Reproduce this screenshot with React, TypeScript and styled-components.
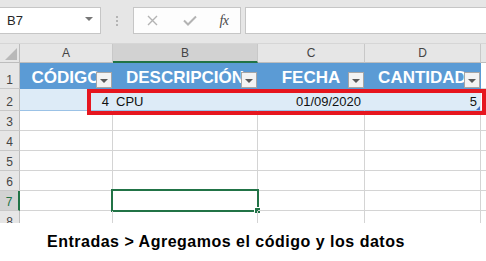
import React from 'react';
import styled, { createGlobalStyle, css } from 'styled-components';

const GlobalStyle = createGlobalStyle`
  html, body { margin: 0; padding: 0; background: #ffffff; }
  body {
    font-family: "Liberation Sans", Arial, sans-serif;
    width: 486px;
    height: 261px;
    overflow: hidden;
  }
  #root { width: 486px; height: 261px; }
`;

const Page = styled.div`
  position: relative;
  width: 486px;
  height: 261px;
  overflow: hidden;
  background: #ffffff;
`;

/* ---------- Formula toolbar ---------- */

const Toolbar = styled.div`
  height: 44px;
  box-sizing: border-box;
  background: #e6e6e6;
  display: flex;
  align-items: flex-start;
  padding-top: 7px;
  border-bottom: 1px solid #d6d6d6;
`;

const NameBox = styled.div`
  width: 101px;
  height: 27px;
  box-sizing: border-box;
  background: #ffffff;
  border: 1px solid #c6c6c6;
  border-left: none;
  display: flex;
  align-items: center;
  justify-content: space-between;
  padding: 0 7px 0 7px;
  font-size: 13px;
  color: #262626;
`;

const Caret = styled.span`
  width: 0;
  height: 0;
  border-left: 4px solid transparent;
  border-right: 4px solid transparent;
  border-top: 4px solid #777777;
  margin-top: -3px;
`;

const Grip = styled.div`
  width: 32px;
  height: 27px;
  display: flex;
  flex-direction: column;
  align-items: center;
  justify-content: center;
  gap: 2px;
`;

const GripDot = styled.span`
  width: 2px;
  height: 2px;
  background: #b4b4b4;
`;

const FormulaButtons = styled.div`
  width: 108px;
  height: 27px;
  box-sizing: border-box;
  background: #fdfdfd;
  border: 1px solid #c6c6c6;
  display: flex;
  align-items: center;
  padding-left: 12px;
`;

const ToolIcon = styled.span<{ $w: number }>`
  width: ${(p) => p.$w}px;
  display: flex;
  align-items: center;
  justify-content: center;
`;

const FxLabel = styled.span`
  font-family: "Liberation Serif", "Times New Roman", serif;
  font-style: italic;
  font-size: 14px;
  color: #4a4a4a;
  letter-spacing: -0.5px;
`;

const FormulaInput = styled.div`
  flex: 1;
  height: 27px;
  box-sizing: border-box;
  margin-left: 4px;
  margin-right: -4px;
  background: #ffffff;
  border: 1px solid #c6c6c6;
`;

/* ---------- Sheet ---------- */

const SheetWrap = styled.div`
  height: 179px;
  overflow: hidden;
`;

const Sheet = styled.div`
  display: grid;
  grid-template-columns: 20px 93px 145px 107px 116px 1fr;
  grid-template-rows: 19px 26px 22px repeat(6, 20px);
`;

type CellKind = 'head' | 'band' | 'plain';

const Corner = styled.div`
  position: relative;
  background: #e6e6e6;
  border-right: 1px solid #bdbdbd;
  border-bottom: 1px solid #bdbdbd;
  box-sizing: border-box;
`;

const CornerTriangle = styled.span`
  position: absolute;
  right: 2px;
  bottom: 2px;
  width: 0;
  height: 0;
  border-left: 12px solid transparent;
  border-bottom: 12px solid #b9b9b9;
`;

const ColHead = styled.div<{ $selected?: boolean }>`
  box-sizing: border-box;
  display: flex;
  align-items: center;
  justify-content: center;
  font-size: 12px;
  color: #444444;
  background: ${(p) => (p.$selected ? '#d2d2d2' : '#e6e6e6')};
  border-right: 1px solid #c8c8c8;
  border-bottom: ${(p) => (p.$selected ? '2px solid #217346' : '1px solid #bdbdbd')};
`;

const RowHead = styled.div<{ $selected?: boolean }>`
  box-sizing: border-box;
  display: flex;
  align-items: flex-end;
  justify-content: center;
  font-size: 12px;
  padding-bottom: 1px;
  color: ${(p) => (p.$selected ? '#217346' : '#444444')};
  background: ${(p) => (p.$selected ? '#d2d2d2' : '#e6e6e6')};
  border-right: ${(p) => (p.$selected ? '2px solid #217346' : '1px solid #bdbdbd')};
  border-bottom: 1px solid #c8c8c8;
`;

const Cell = styled.div<{ $kind: CellKind; $align?: 'left' | 'right' | 'center' }>`
  position: relative;
  box-sizing: border-box;
  display: flex;
  align-items: flex-end;
  white-space: nowrap;
  border-right: 1px solid #d4d4d4;
  border-bottom: 1px solid #d4d4d4;
  justify-content: ${(p) =>
    p.$align === 'right' ? 'flex-end' : p.$align === 'center' ? 'center' : 'flex-start'};
  font-size: 13px;
  color: #111111;
  padding: 0 3px 1px 3px;
  ${(p) =>
    p.$kind === 'head' &&
    css`
      background: #5b9bd5;
      border-right-color: #5b9bd5;
      border-bottom-color: #5b9bd5;
      color: #ffffff;
      font-weight: bold;
      font-size: 17px;
      padding-bottom: 0;
    `}
  ${(p) =>
    p.$kind === 'band' &&
    css`
      background: #ddebf7;
      border-right-color: #ddebf7;
      border-bottom-color: #9bc2e6;
      padding-bottom: 1px;
    `}
`;

const FilterButton = styled.span`
  position: absolute;
  right: 0;
  bottom: 0;
  width: 16px;
  height: 16px;
  box-sizing: border-box;
  background: #f3f3f3;
  border: 1px solid #a6a6a6;
  display: flex;
  align-items: center;
  justify-content: center;
  &::after {
    content: '';
    width: 0;
    height: 0;
    margin-top: 2px;
    border-left: 4px solid transparent;
    border-right: 4px solid transparent;
    border-top: 4px solid #595959;
  }
`;

const ResizeHandle = styled.span`
  position: absolute;
  right: 0;
  bottom: 0;
  width: 0;
  height: 0;
  border-left: 4px solid transparent;
  border-bottom: 4px solid #4472c4;
`;

const Selection = styled.span`
  position: absolute;
  left: -2px;
  top: -2px;
  right: -2px;
  bottom: -2px;
  border: 2px solid #217346;
  pointer-events: none;
`;

const FillHandle = styled.span`
  position: absolute;
  right: -4px;
  bottom: -4px;
  width: 5px;
  height: 5px;
  background: #217346;
  border: 1px solid #ffffff;
`;

/* ---------- Annotation ---------- */

const Highlight = styled.div`
  position: absolute;
  left: 87px;
  top: 89px;
  width: 399px;
  height: 26px;
  box-sizing: border-box;
  border: 4px solid #e6161f;
  pointer-events: none;
`;

const Caption = styled.div`
  height: 38px;
  display: flex;
  align-items: center;
  padding-left: 47px;
  padding-bottom: 1px;
  box-sizing: border-box;
  font-family: "Liberation Sans", Arial, sans-serif;
  font-weight: bold;
  font-size: 16px;
  letter-spacing: 0.5px;
  color: #000000;
`;

/* ---------- Data ---------- */

const columns = ['A', 'B', 'C', 'D', 'E'];
const headers = ['CÓDIGO', 'DESCRIPCIÓN', 'FECHA', 'CANTIDAD'];
const rowTwo: { text: string; align: 'left' | 'right' }[] = [
  { text: '4', align: 'right' },
  { text: 'CPU', align: 'left' },
  { text: '01/09/2020', align: 'right' },
  { text: '5', align: 'right' },
];
const emptyRows = [3, 4, 5, 6, 7, 8];
const selected = { col: 'B', row: 7 };

const CrossIcon = () => (
  <svg width="11" height="11" viewBox="0 0 11 11">
    <path d="M1 1 L10 10 M10 1 L1 10" stroke="#b3b3b3" strokeWidth="1.4" fill="none" />
  </svg>
);

const CheckIcon = () => (
  <svg width="14" height="11" viewBox="0 0 14 11">
    <path d="M1 5.5 L5 9.5 L13 1.5" stroke="#b3b3b3" strokeWidth="2" fill="none" />
  </svg>
);

export default function App() {
  return (
    <Page>
      <GlobalStyle />
      <Toolbar>
        <NameBox>
          <span>B7</span>
          <Caret />
        </NameBox>
        <Grip>
          <GripDot />
          <GripDot />
          <GripDot />
        </Grip>
        <FormulaButtons>
          <ToolIcon $w={13}>
            <CrossIcon />
          </ToolIcon>
          <ToolIcon $w={24} />
          <ToolIcon $w={14}>
            <CheckIcon />
          </ToolIcon>
          <ToolIcon $w={19} />
          <ToolIcon $w={16}>
            <FxLabel>fx</FxLabel>
          </ToolIcon>
        </FormulaButtons>
        <FormulaInput />
      </Toolbar>

      <SheetWrap>
        <Sheet>
          <Corner>
            <CornerTriangle />
          </Corner>
          {columns.map((c) => (
            <ColHead key={c} $selected={c === selected.col}>
              {c === 'E' ? '' : c}
            </ColHead>
          ))}

          <RowHead>1</RowHead>
          {headers.map((h) => (
            <Cell key={h} $kind="head" $align="center">
              {h}
              <FilterButton />
            </Cell>
          ))}
          <Cell $kind="plain" />

          <RowHead>2</RowHead>
          {rowTwo.map((v, i) => (
            <Cell key={i} $kind="band" $align={v.align}>
              {v.text}
              {i === rowTwo.length - 1 && <ResizeHandle />}
            </Cell>
          ))}
          <Cell $kind="plain" />

          {emptyRows.map((r) => (
            <React.Fragment key={r}>
              <RowHead $selected={r === selected.row}>{r}</RowHead>
              {columns.map((c) => (
                <Cell key={c} $kind="plain">
                  {r === selected.row && c === selected.col && (
                    <Selection>
                      <FillHandle />
                    </Selection>
                  )}
                </Cell>
              ))}
            </React.Fragment>
          ))}
        </Sheet>
      </SheetWrap>

      <Caption>Entradas &gt; Agregamos el código y los datos</Caption>

      <Highlight />
    </Page>
  );
}
